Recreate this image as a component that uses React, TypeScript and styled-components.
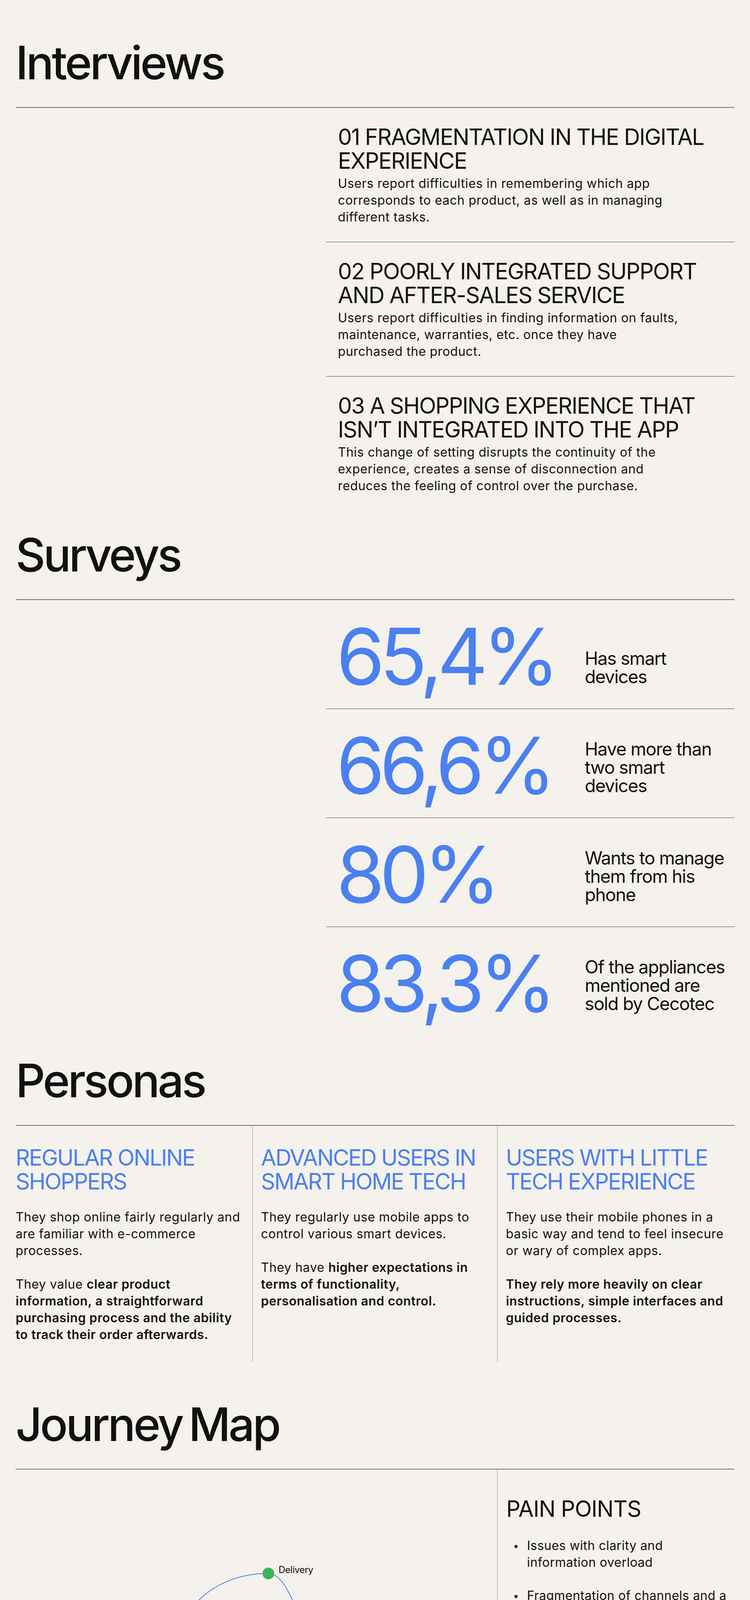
import React from "react";
import styled, { createGlobalStyle } from "styled-components";

const BLUE = "#4a80f0";
const INK = "#111111";
const RULE = "#6f6f6f";

const GlobalStyle = createGlobalStyle`
  html, body {
    margin: 0;
    padding: 0;
    background: #f5f1ec;
  }
  body {
    font-family: Inter, "Noto Sans", sans-serif;
    color: ${INK};
  }
  * {
    box-sizing: border-box;
  }
`;

const Page = styled.main`
  width: 1920px;
  padding: 101px 40px 90px;
  background: #f5f1ec;
`;

const Section = styled.section<{ $top?: number }>`
  margin-top: ${({ $top }) => $top ?? 0}px;
`;

const SectionTitle = styled.h2`
  margin: 0 0 55px;
  font-size: 118px;
  line-height: 1;
  font-weight: 500;
  letter-spacing: -0.045em;
  word-spacing: -0.08em;
`;

/* ---------- interviews ---------- */

const SplitBlock = styled.div`
  display: grid;
  grid-template-columns: 795px 1fr;
  border-top: 2px solid ${RULE};
`;

const Stack = styled.div`
  grid-column: 2;
`;

const Finding = styled.article`
  padding: 44px 0 42px 30px;

  & + & {
    border-top: 1px solid #444;
  }
`;

const FindingTitle = styled.h3`
  margin: 0 0 6px;
  font-size: 57px;
  line-height: 61px;
  font-weight: 400;
  letter-spacing: -0.034em;
  white-space: nowrap;
`;

const BodyText = styled.p`
  margin: 0;
  font-size: 32px;
  line-height: 43px;
  font-weight: 400;
  letter-spacing: 0.02em;
  white-space: nowrap;

  & + & {
    margin-top: 43px;
  }
`;

/* ---------- surveys ---------- */

const StatRow = styled.div`
  display: grid;
  grid-template-columns: 636px 1fr;
  align-items: end;
  padding: 44px 0 34px 26px;

  & + & {
    border-top: 1px solid #444;
  }
`;

const StatValue = styled.div`
  font-size: 200px;
  line-height: 1;
  font-weight: 400;
  color: ${BLUE};
  letter-spacing: -0.065em;
  white-space: nowrap;
`;

const StatLabel = styled.p`
  margin: 0;
  padding-bottom: 24px;
  font-size: 46px;
  line-height: 47px;
  letter-spacing: -0.03em;
  white-space: nowrap;
`;

/* ---------- personas ---------- */

const PersonaGrid = styled.div`
  display: grid;
  grid-template-columns: 606px 627px 1fr;
  border-top: 2px solid ${RULE};
`;

const PersonaCol = styled.div`
  padding: 51px 16px 49px 21px;

  &:first-child {
    padding-left: 0;
  }
  & + & {
    border-left: 1px solid #8c8c8c;
  }
`;

const PersonaTitle = styled.h3`
  margin: 0 0 39px;
  font-size: 57px;
  line-height: 61px;
  font-weight: 400;
  color: ${BLUE};
  letter-spacing: -0.042em;
  white-space: nowrap;
`;

const Strong = styled.strong`
  font-weight: 600;
`;

/* ---------- journey map ---------- */

const JourneyGrid = styled.div`
  display: grid;
  grid-template-columns: 1233px 1fr;
  border-top: 2px solid ${RULE};
`;

const MapArea = styled.div`
  padding-top: 198px;

  svg {
    display: block;
  }
`;

const PainPanel = styled.div`
  border-left: 1px solid #8c8c8c;
  padding: 70px 0 62px 22px;
`;

const PainTitle = styled.h3`
  margin: 0 0 42px;
  font-size: 57px;
  line-height: 61px;
  font-weight: 400;
  letter-spacing: -0.02em;
`;

const PainList = styled.ul`
  margin: 0;
  padding: 0;
  list-style: none;
`;

const PainItem = styled.li`
  display: flex;
  align-items: flex-start;
  font-size: 32px;
  line-height: 43px;
  letter-spacing: 0.015em;
  white-space: nowrap;

  & + & {
    margin-top: 42px;
  }
`;

const Bullet = styled.span`
  flex: 0 0 8px;
  width: 8px;
  height: 8px;
  margin: 20px 24px 0 21px;
  border-radius: 50%;
  background: ${INK};
`;

type Stop = {
  x: number;
  y: number;
  color: string;
  lines: string[];
  lx: number;
  ly: number;
};

const ORANGE = "#eba000";
const RED = "#ea2020";
const GREEN = "#3db35a";

const stops: Stop[] = [
  { x: 70, y: 237, color: ORANGE, lines: ["Discovery"], lx: 94, ly: 245 },
  { x: 263, y: 321, color: RED, lines: ["Search"], lx: 249, ly: 359 },
  { x: 455, y: 152, color: GREEN, lines: ["Purchase"], lx: 480, ly: 162 },
  { x: 647, y: 68, color: GREEN, lines: ["Delivery"], lx: 673, ly: 67 },
  { x: 839, y: 321, color: RED, lines: ["Setup", "& Use"], lx: 824, ly: 359 },
  { x: 1031, y: 237, color: ORANGE, lines: ["After-sales", "& Support"], lx: 1057, ly: 246 },
];

const curve =
  "M 70 237 C 100 292, 170 321, 263 321 " +
  "C 322 321, 398 222, 455 152 " +
  "C 500 97, 570 68, 647 68 " +
  "C 720 68, 742 321, 839 321 " +
  "C 925 321, 990 300, 1031 237";

const JourneyChart = () => (
  <svg width="1200" height="400" viewBox="0 0 1200 400">
    <path d={curve} fill="none" stroke={BLUE} strokeWidth="2" />
    {stops.map((s) => (
      <g key={s.lines[0]}>
        <circle cx={s.x} cy={s.y} r="15" fill={s.color} />
        <text
          x={s.lx}
          y={s.ly}
          fontFamily="Inter, sans-serif"
          fontSize="24"
          fill={INK}
          letterSpacing="-0.5"
        >
          {s.lines.map((line, i) => (
            <tspan key={line} x={s.lx} dy={i === 0 ? 0 : 28}>
              {line}
            </tspan>
          ))}
        </text>
      </g>
    ))}
  </svg>
);

const findings = [
  {
    title: ["01 FRAGMENTATION IN THE DIGITAL", "EXPERIENCE"],
    text: [
      "Users report difficulties in remembering which app",
      "corresponds to each product, as well as in managing",
      "different tasks.",
    ],
  },
  {
    title: ["02 POORLY INTEGRATED SUPPORT", "AND AFTER-SALES SERVICE"],
    text: [
      "Users report difficulties in finding information on faults,",
      "maintenance, warranties, etc. once they have",
      "purchased the product.",
    ],
  },
  {
    title: ["03 A SHOPPING EXPERIENCE THAT", "ISN\u2019T INTEGRATED INTO THE APP"],
    text: [
      "This change of setting disrupts the continuity of the",
      "experience, creates a sense of disconnection and",
      "reduces the feeling of control over the purchase.",
    ],
  },
];

const stats = [
  { value: "65,4%", label: ["Has smart", "devices"] },
  { value: "66,6%", label: ["Have more than", "two smart", "devices"] },
  { value: "80%", label: ["Wants to manage", "them from his", "phone"] },
  { value: "83,3%", label: ["Of the appliances", "mentioned are", "sold by Cecotec"] },
];

const Lines = ({ lines }: { lines: string[] }) => (
  <>
    {lines.map((l, i) => (
      <React.Fragment key={i}>
        {i > 0 && <br />}
        {l}
      </React.Fragment>
    ))}
  </>
);

export default function App() {
  return (
    <>
      <GlobalStyle />
      <Page>
        <Section>
          <SectionTitle>Interviews</SectionTitle>
          <SplitBlock>
            <Stack>
              {findings.map((f) => (
                <Finding key={f.title[0]}>
                  <FindingTitle>
                    <Lines lines={f.title} />
                  </FindingTitle>
                  <BodyText>
                    <Lines lines={f.text} />
                  </BodyText>
                </Finding>
              ))}
            </Stack>
          </SplitBlock>
        </Section>

        <Section $top={54}>
          <SectionTitle>Surveys</SectionTitle>
          <SplitBlock>
            <Stack>
              {stats.map((s) => (
                <StatRow key={s.value}>
                  <StatValue>{s.value}</StatValue>
                  <StatLabel>
                    <Lines lines={s.label} />
                  </StatLabel>
                </StatRow>
              ))}
            </Stack>
          </SplitBlock>
        </Section>

        <Section $top={56}>
          <SectionTitle>Personas</SectionTitle>
          <PersonaGrid>
            <PersonaCol>
              <PersonaTitle>
                REGULAR ONLINE
                <br />
                SHOPPERS
              </PersonaTitle>
              <BodyText>
                They shop online fairly regularly and
                <br />
                are familiar with e-commerce
                <br />
                processes.
              </BodyText>
              <BodyText>
                They value <Strong>clear product</Strong>
                <br />
                <Strong>information, a straightforward</Strong>
                <br />
                <Strong>purchasing process and the ability</Strong>
                <br />
                <Strong>to track their order afterwards.</Strong>
              </BodyText>
            </PersonaCol>
            <PersonaCol>
              <PersonaTitle>
                ADVANCED USERS IN
                <br />
                SMART HOME TECH
              </PersonaTitle>
              <BodyText>
                They regularly use mobile apps to
                <br />
                control various smart devices.
              </BodyText>
              <BodyText>
                They have <Strong>higher expectations in</Strong>
                <br />
                <Strong>terms of functionality,</Strong>
                <br />
                <Strong>personalisation and control.</Strong>
              </BodyText>
            </PersonaCol>
            <PersonaCol>
              <PersonaTitle>
                USERS WITH LITTLE
                <br />
                TECH EXPERIENCE
              </PersonaTitle>
              <BodyText>
                They use their mobile phones in a
                <br />
                basic way and tend to feel insecure
                <br />
                or wary of complex apps.
              </BodyText>
              <BodyText>
                <Strong>
                  They rely more heavily on clear
                  <br />
                  instructions, simple interfaces and
                  <br />
                  guided processes.
                </Strong>
              </BodyText>
            </PersonaCol>
          </PersonaGrid>
        </Section>

        <Section $top={100}>
          <SectionTitle>Journey Map</SectionTitle>
          <JourneyGrid>
            <MapArea>
              <JourneyChart />
            </MapArea>
            <PainPanel>
              <PainTitle>PAIN POINTS</PainTitle>
              <PainList>
                <PainItem>
                  <Bullet />
                  <span>
                    Issues with clarity and
                    <br />
                    information overload
                  </span>
                </PainItem>
                <PainItem>
                  <Bullet />
                  <span>
                    Fragmentation of channels and a
                    <br />
                    lack of consistency between
                    <br />
                    them
                  </span>
                </PainItem>
                <PainItem>
                  <Bullet />
                  <span>
                    {"\u00a0"}Complex configuration and non-
                    <br />
                    centralised control
                  </span>
                </PainItem>
                <PainItem>
                  <Bullet />
                  <span>
                    Inefficient APPs: they lack
                    <br />
                    products, do not allow
                    <br />
                    purchases, and do not have
                    <br />
                    native support
                  </span>
                </PainItem>
              </PainList>
            </PainPanel>
          </JourneyGrid>
        </Section>
      </Page>
    </>
  );
}
